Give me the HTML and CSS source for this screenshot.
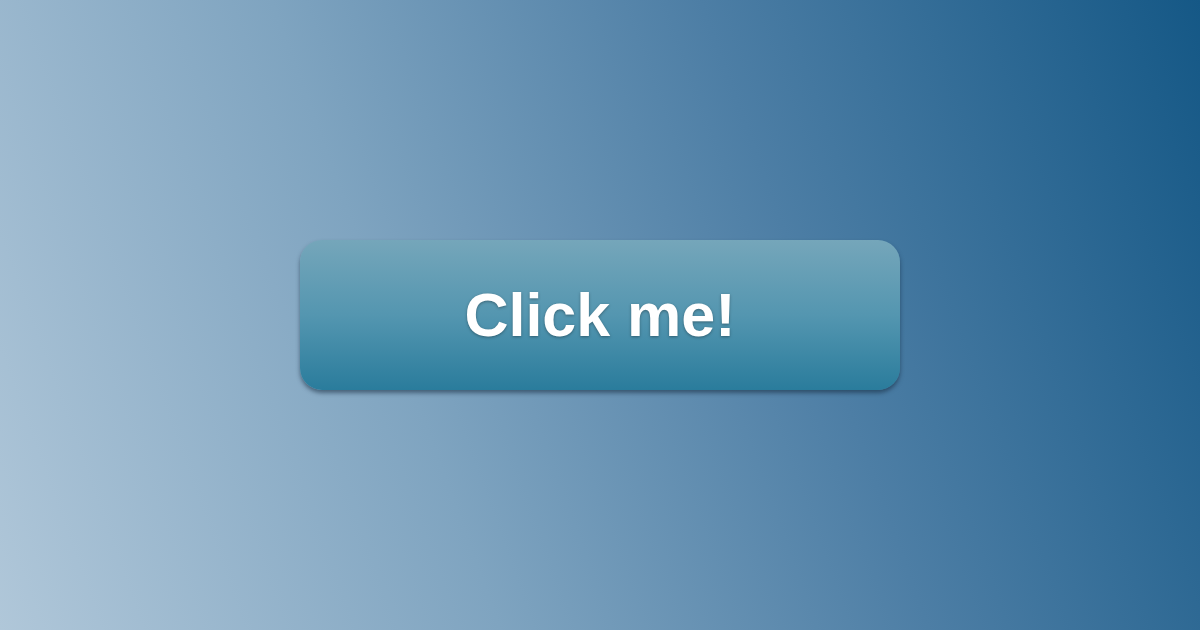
FILE: index.html
```html
<!DOCTYPE html>
<html>
<head>
<meta charset="utf-8">
<link rel="stylesheet" href="styles.css">
</head>
<body>
<main class="stage">
  <button class="cta" type="button">Click me!</button>
</main>
</body>
</html>
```

FILE: styles.css
```css
html, body {
  margin: 0;
  padding: 0;
  width: 1200px;
  height: 630px;
  overflow: hidden;
}
.stage {
  width: 1200px;
  height: 630px;
  display: flex;
  align-items: center;
  justify-content: center;
  background: linear-gradient(70deg, #b0c7d9 0%, #7fa4c0 35%, #4d7ea5 65%, #155886 100%);
}
.cta {
  width: 600px;
  height: 150px;
  border: none;
  border-radius: 22px;
  background: linear-gradient(to bottom, #75a6ba 0%, #5496b0 50%, #2a7c9c 100%);
  box-shadow: 0 3px 4px rgba(20, 40, 60, 0.55);
  color: #ffffff;
  font-family: "Liberation Sans", Arial, sans-serif;
  font-weight: bold;
  font-size: 61px;
  text-shadow: 0 1px 3px rgba(0, 0, 0, 0.35);
  cursor: pointer;
  padding: 0;
  margin-top: 0;
}
```
